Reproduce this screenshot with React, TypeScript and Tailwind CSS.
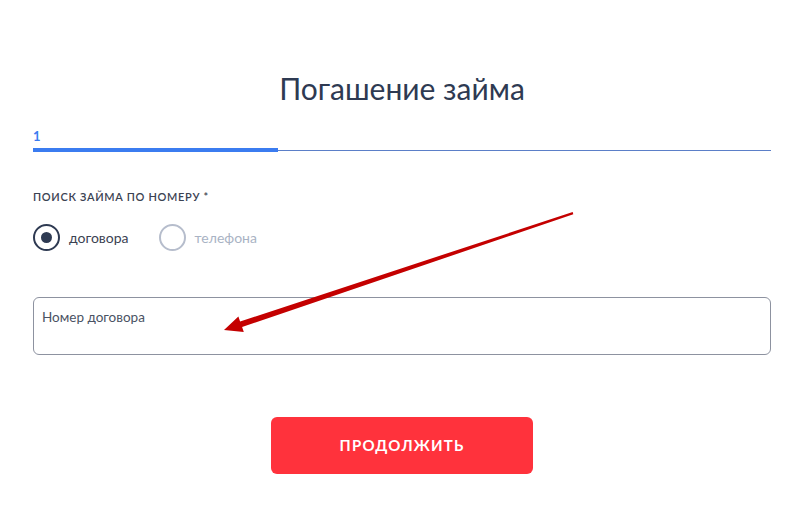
import React, { useState } from "react";

const font = { fontFamily: "Lato, 'Noto Sans', sans-serif" };

export default function App() {
  const [mode, setMode] = useState<"contract" | "phone">("contract");

  return (
    <div className="relative w-[800px] h-[510px] bg-white overflow-hidden" style={font}>
      <div className="pl-[33px] pr-[29px] w-full">
        <h1 className="pt-[70px] text-center text-[30px] leading-[36px] text-[#2e3a52]">
          Погашение займа
        </h1>

        {/* steps */}
        <div className="mt-[23px]">
          <div className="text-[13px] leading-[14px] font-bold text-[#3b7cf0]">1</div>
          <div className="relative mt-[5px] h-[4px]">
            <div className="absolute left-0 right-0 top-[2px] h-px bg-[#5b7fc8]" />
            <div className="absolute left-0 top-0 h-[4px] w-[245px] bg-[#3b7cf0]" />
          </div>
        </div>

        <div className="mt-[38px] text-[11px] leading-[14px] tracking-[0.06em] text-[#3b4252] font-semibold">
          ПОИСК ЗАЙМА ПО НОМЕРУ *
        </div>

        <div className="mt-[20px] flex items-center gap-[30px]">
          <button
            onClick={() => setMode("contract")}
            className="flex items-center gap-[9px]"
          >
            <span
              className={`w-[27px] h-[27px] rounded-full border-2 flex items-center justify-center ${
                mode === "contract" ? "border-[#2e3a52]" : "border-[#b6bdcc]"
              }`}
            >
              {mode === "contract" && <span className="w-[11px] h-[11px] rounded-full bg-[#2e3a52]" />}
            </span>
            <span className={`text-[14px] ${mode === "contract" ? "text-[#3b4252]" : "text-[#a9b3c4]"}`}>
              договора
            </span>
          </button>
          <button onClick={() => setMode("phone")} className="flex items-center gap-[9px]">
            <span
              className={`w-[27px] h-[27px] rounded-full border-2 flex items-center justify-center ${
                mode === "phone" ? "border-[#2e3a52]" : "border-[#b6bdcc]"
              }`}
            >
              {mode === "phone" && <span className="w-[11px] h-[11px] rounded-full bg-[#2e3a52]" />}
            </span>
            <span className={`text-[14px] ${mode === "phone" ? "text-[#3b4252]" : "text-[#a9b3c4]"}`}>
              телефона
            </span>
          </button>
        </div>

        <div className="mt-[46px] h-[58px] rounded-[6px] border border-[#8d92a0] px-[8px] pt-[6px]">
          <input
            className="w-full bg-transparent outline-none text-[13.5px] leading-[16px] text-[#3b4252] placeholder:text-[#4a5263]"
            placeholder={mode === "contract" ? "Номер договора" : "Номер телефона"}
          />
        </div>

        <div className="mt-[62px] flex justify-center">
          <button className="w-[262px] h-[57px] rounded-[6px] bg-[#ff323c] text-white text-[15px] font-bold tracking-[0.08em]">
            ПРОДОЛЖИТЬ
          </button>
        </div>
      </div>

      {/* annotation arrow */}
      <svg className="absolute left-0 top-0 pointer-events-none" width="800" height="510">
        <polygon
          points="572.7,212 240.1,321.5 238.4,316.5 224,330 243.8,332 242.1,327.1 573.3,214.2"
          fill="#c40000"
        />
      </svg>
    </div>
  );
}
